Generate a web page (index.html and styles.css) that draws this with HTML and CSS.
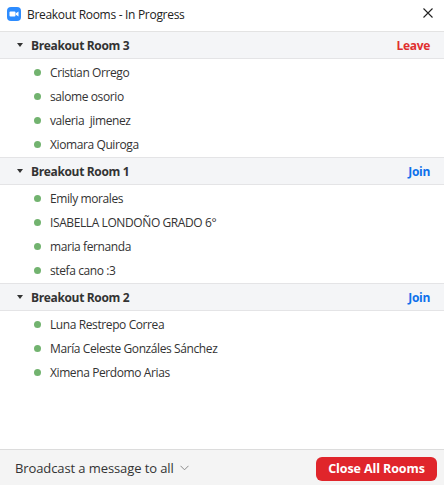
FILE: index.html
```html
<!DOCTYPE html>
<html>
<head>
<meta charset="utf-8">
<link rel="stylesheet" href="styles.css">
</head>
<body>
<div class="window">
  <div class="titlebar">
    <svg class="logo" width="14" height="14" viewBox="0 0 14 14">
      <rect x="0" y="0" width="14" height="14" rx="4" fill="#2d8cff"/>
      <rect x="2.5" y="4.5" width="6" height="5" rx="1" fill="#fff"/>
      <path d="M8.8 6.3 L11.5 4.6 V9.4 L8.8 7.7 Z" fill="#fff"/>
    </svg>
    <span class="title">Breakout Rooms - In Progress</span>
    <svg class="close" width="10" height="10" viewBox="0 0 10 10">
      <path d="M0.5 0.5 L9.5 9.5 M9.5 0.5 L0.5 9.5" stroke="#222" stroke-width="1.1" fill="none"/>
    </svg>
  </div>
  <div class="rooms">
    <div class="room">
      <div class="room-head">
        <span class="caret"></span>
        <span class="room-name">Breakout Room 3</span>
        <span class="action leave">Leave</span>
      </div>
      <ul class="people">
        <li><span class="dot"></span>Cristian Orrego</li>
        <li><span class="dot"></span>salome osorio</li>
        <li><span class="dot"></span>valeria&nbsp; jimenez</li>
        <li><span class="dot"></span>Xiomara Quiroga</li>
      </ul>
    </div>
    <div class="room">
      <div class="room-head">
        <span class="caret"></span>
        <span class="room-name">Breakout Room 1</span>
        <span class="action join">Join</span>
      </div>
      <ul class="people">
        <li><span class="dot"></span>Emily morales</li>
        <li><span class="dot"></span>ISABELLA LONDOÑO GRADO 6°</li>
        <li><span class="dot"></span>maria fernanda</li>
        <li><span class="dot"></span>stefa cano :3</li>
      </ul>
    </div>
    <div class="room">
      <div class="room-head">
        <span class="caret"></span>
        <span class="room-name">Breakout Room 2</span>
        <span class="action join">Join</span>
      </div>
      <ul class="people">
        <li><span class="dot"></span>Luna Restrepo Correa</li>
        <li><span class="dot"></span>María Celeste Gonzáles Sánchez</li>
        <li><span class="dot"></span>Ximena Perdomo Arias</li>
      </ul>
    </div>
  </div>
  <div class="footer">
    <span class="broadcast">Broadcast a message to all
      <svg class="chev" width="9" height="6" viewBox="0 0 9 6"><path d="M0.5 0.8 L4.5 4.8 L8.5 0.8" stroke="#8a8a8a" stroke-width="1" fill="none"/></svg>
    </span>
    <button class="close-all">Close All Rooms</button>
  </div>
</div>
</body>
</html>
```

FILE: styles.css
```css
* { box-sizing: border-box; }
html, body {
  margin: 0;
  padding: 0;
  width: 444px;
  height: 485px;
  background: #fff;
  font-family: "Open Sans", "Noto Sans", sans-serif;
  color: #232333;
}
.window {
  display: flex;
  flex-direction: column;
  height: 485px;
}
.titlebar {
  height: 32px;
  display: flex;
  align-items: center;
  padding: 0 11px 0 7px;
  border-bottom: 1px solid #e3e3e3;
  flex-shrink: 0;
}
.logo { display: block; margin-right: 6px; margin-top: -3px; }
.title {
  font-size: 12px;
  color: #222;
  flex: 1;
  margin-top: -3px;
  letter-spacing: -0.3px;
}
.close { display: block; margin-top: -6px; }
.rooms { flex: 1; }
.room-head {
  height: 27px;
  background: #f4f5f7;
  border-bottom: 1px solid #e4e4e6;
  display: flex;
  align-items: center;
  padding: 0 14px 0 17px;
}
.room + .room .room-head { border-top: 1px solid #e4e4e6; height: 28px; }
.caret {
  width: 0; height: 0;
  border-left: 3.5px solid transparent;
  border-right: 3.5px solid transparent;
  border-top: 4px solid #333;
  margin-right: 8px;
}
.room-name {
  font-weight: 700;
  font-size: 12px;
  color: #333;
  flex: 1;
  letter-spacing: -0.35px;
}
.action { font-weight: 700; font-size: 12px; letter-spacing: -0.3px; }
.leave { color: #e02f2f; }
.join { color: #0e71eb; }
.people {
  list-style: none;
  margin: 0;
  padding: 1px 0 1px 0;
}
.people li {
  height: 24px;
  display: flex;
  align-items: center;
  padding-left: 34px;
  font-size: 12px;
  color: #333;
  letter-spacing: -0.4px;
}
.dot {
  width: 7px; height: 7px;
  border-radius: 50%;
  background: #72b36f;
  margin-right: 9px;
}
.footer {
  height: 36px;
  background: #f4f4f4;
  border-top: 1px solid #dcdcdc;
  display: flex;
  align-items: center;
  justify-content: space-between;
  padding: 0 7px 0 15px;
  flex-shrink: 0;
}
.broadcast {
  font-size: 13px;
  color: #333;
  display: flex;
  align-items: center;
  letter-spacing: -0.1px;
}
.chev { margin-left: 6px; margin-top: 1px; }
.close-all {
  background: #e0252b;
  color: #fff;
  border: none;
  border-radius: 6px;
  height: 24px;
  width: 121px;
  font-family: "Open Sans", "Noto Sans", sans-serif;
  font-weight: 700;
  font-size: 12.5px;
  padding: 0;
  letter-spacing: -0.1px;
  margin-top: 2px;
}
```
